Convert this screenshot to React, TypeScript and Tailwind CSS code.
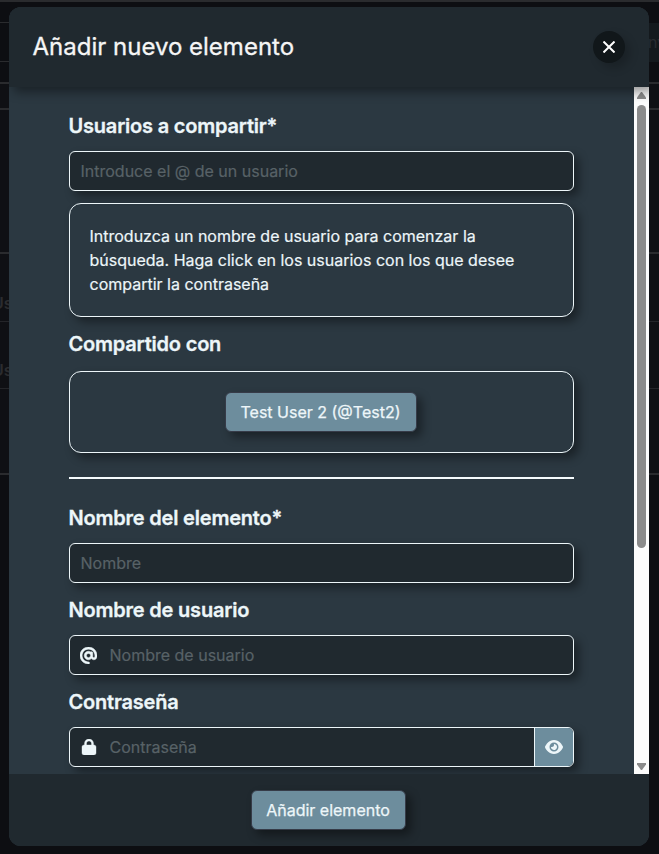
import React from "react";
import { FaAt, FaLock, FaEye } from "react-icons/fa6";

const drop = "shadow-[5px_5px_10px_rgba(0,0,0,0.4)]";

function Label({ children, className = "mb-[10px]" }: { children: React.ReactNode; className?: string }) {
  return (
    <label className={`-ml-[0.5px] block text-[20px] font-semibold leading-[30px] tracking-[-0.2px] text-[#edf6f9] [-webkit-text-stroke:0.3px] ${className}`}>
      {children}
    </label>
  );
}

function TextField({ placeholder, icon, action }: { placeholder: string; icon?: React.ReactNode; action?: React.ReactNode }) {
  return (
    <div className={`mb-3 flex h-10 overflow-hidden rounded-md border border-[#edf6f9] bg-[#20292f] ${drop}`}>
      {icon && <span className="flex w-[37px] shrink-0 items-center justify-center text-[#edf6f9]">{icon}</span>}
      <input
        className={`min-w-0 flex-1 bg-transparent text-base text-white outline-none [-webkit-text-stroke:0.2px] placeholder:text-[#586267] ${icon ? "pl-[2.5px]" : "pl-[10.5px]"}`}
        placeholder={placeholder}
      />
      {action}
    </div>
  );
}

function Button({ children, className }: { children: React.ReactNode; className: string }) {
  return (
    <button className={`mr-[2px] h-10 whitespace-nowrap rounded-md border border-[#363b48] bg-[#6d8d9d] text-base text-[#edf6f9] [-webkit-text-stroke:0.25px] ${drop} ${className}`}>
      {children}
    </button>
  );
}

function Backdrop() {
  return (
    <div className="flex h-full flex-col bg-[#0d0e12] text-base text-[#2b2c2f]">
      <div className="h-[2px] bg-[#2a2b2e]" />
      <div className="flex h-[60px] items-end justify-between">
        <div className="h-10 w-[30px] border-y border-[#2a2b2e]" />
        <div className="flex h-[39px] w-[30px] items-center bg-[#14191d] pb-px pl-[19px] text-[#292c30]">nv</div>
      </div>
      <div className="h-5" />
      <div className="h-[2px] bg-[#2a2b2e]" />
      <div className="h-6 bg-[#0f1014]" />
      <div className="h-[2px] bg-[#2a2b2e]" />
      <div className="h-[142px] bg-[#0f1014]" />
      <div className="h-[2px] bg-[#2a2b2e]" />
      <div className="flex h-[67px] items-end bg-[#0f1014] pb-[6px]"><span className="-ml-2 font-semibold">Us</span></div>
      <div className="h-px bg-[#242529]" />
      <div className="flex h-[66px] items-end bg-[#0f1014] pb-[6px]"><span className="-ml-2 font-semibold">Us</span></div>
      <div className="h-px bg-[#242529]" />
      <div className="h-[84px] bg-[#0f1014]" />
      <div className="h-[2px] bg-[#2a2b2e]" />
    </div>
  );
}

function Scrollbar() {
  return (
    <div className="flex w-[15px] shrink-0 flex-col items-center bg-[#fcfcfc] pb-1 pt-[5px]">
      <svg className="shrink-0" width="9" height="7" viewBox="0 0 9 7" fill="#8b8b8b"><path d="M4 0h1l4 5.5V7H0V5.5z" /></svg>
      <div className="mt-[6px] h-[443px] w-[9px] shrink-0 rounded-full bg-[#8b8b8b]" />
      <div className="flex-1" />
      <svg className="shrink-0" width="9" height="7" viewBox="0 0 9 7" fill="#8b8b8b"><path d="M4 7h1l4-5.5V0H0v1.5z" /></svg>
    </div>
  );
}

export default function App() {
  return (
    <div className="relative h-[854px] w-[659px] overflow-hidden font-['Inter',sans-serif]">
      <Backdrop />
      <div className="absolute left-[9px] top-[7px] flex h-[839px] w-[640px] flex-col overflow-hidden rounded-xl bg-[#2b3841]">
        <header className="relative z-10 flex h-20 shrink-0 items-center justify-between bg-[#20292f] pl-[23.5px] pr-6 shadow-[5px_5px_10px_rgba(0,0,0,0.4)]">
          <h1 className="text-2xl text-[#f5f5f5] [-webkit-text-stroke:0.3px]">Añadir nuevo elemento</h1>
          <button className="flex size-8 items-center justify-center rounded-full bg-[#11171a] text-white shadow-[5px_5px_10px_rgba(0,0,0,0.2)]">
            <svg width="12" height="12" viewBox="0 0 12 12" stroke="currentColor" strokeWidth="2"><path d="M.5.5l11 11M11.5.5L.5 11.5" /></svg>
          </button>
        </header>
        <div className="flex min-h-0 flex-1 overflow-hidden">
          <main className="flex-1 overflow-hidden px-[60px] pt-6">
            <Label>Usuarios a compartir*</Label>
            <TextField placeholder="Introduce el @ de un usuario" />
            <div className={`mb-3 h-[114px] rounded-xl border border-[#edf6f9] pl-[19.5px] pr-5 pt-5 text-base leading-6 text-[#edf6f9] [-webkit-text-stroke:0.2px] ${drop}`}>
              Introduzca un nombre de usuario para comenzar la búsqueda. Haga click en los usuarios con los que desee compartir la contraseña
            </div>
            <Label className="mb-3">Compartido con</Label>
            <div className={`flex h-[82px] items-center justify-center rounded-xl border border-[#edf6f9] ${drop}`}>
              <Button className="w-[192px]">Test User 2 (@Test2)</Button>
            </div>
            <hr className="my-6 h-[2px] border-0 bg-[#f5fbfd]" />
            <Label>Nombre del elemento*</Label>
            <TextField placeholder="Nombre" />
            <Label>Nombre de usuario</Label>
            <TextField placeholder="Nombre de usuario" icon={<FaAt size={17} stroke="currentColor" strokeWidth={16} />} />
            <Label>Contraseña</Label>
            <TextField
              placeholder="Contraseña"
              icon={<FaLock size={16} stroke="currentColor" strokeWidth={12} />}
              action={
                <button className="flex w-[39px] items-center justify-center border-l border-[#edf6f9] bg-[#6d8d9d] text-[#edf6f9]">
                  <FaEye size={18} />
                </button>
              }
            />
          </main>
          <Scrollbar />
        </div>
        <footer className="flex h-[72px] shrink-0 items-center justify-center bg-[#20292f]">
          <Button className="w-[155px]">Añadir elemento</Button>
        </footer>
      </div>
    </div>
  );
}
